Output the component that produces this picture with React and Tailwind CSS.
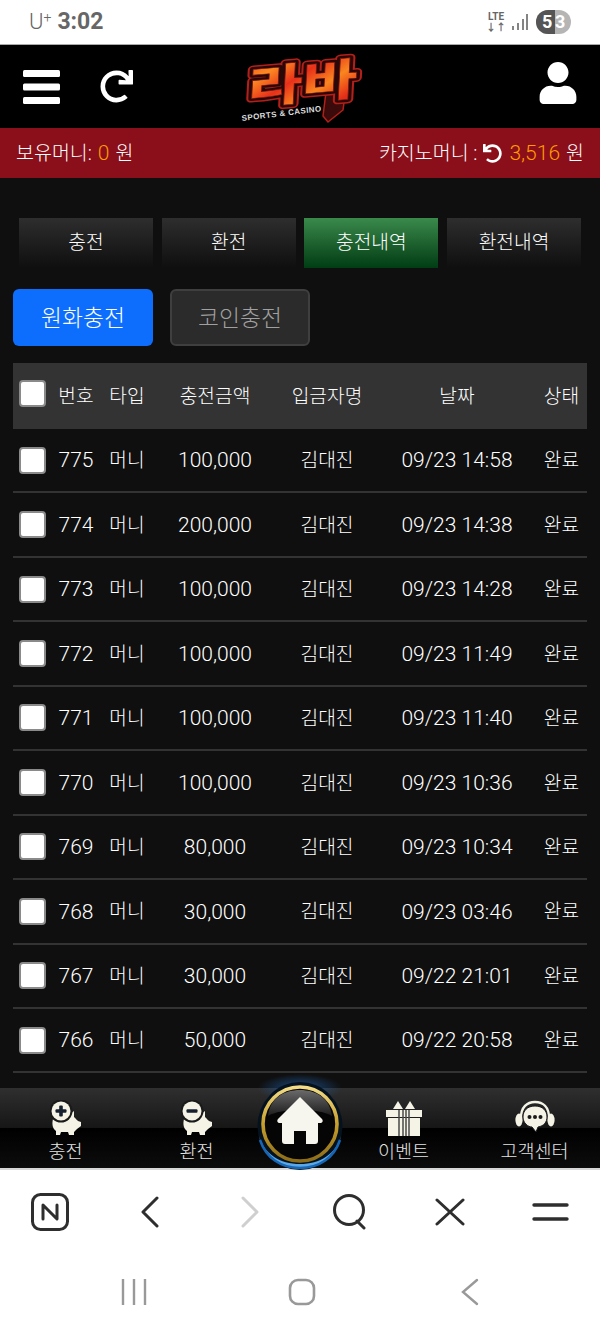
import React from "react";
import { FaRedo, FaUndo, FaUser } from "react-icons/fa";

const font = { fontFamily: 'Roboto, "Noto Sans CJK KR", sans-serif' };

const rows = [
  ["775", "100,000", "09/23 14:58"],
  ["774", "200,000", "09/23 14:38"],
  ["773", "100,000", "09/23 14:28"],
  ["772", "100,000", "09/23 11:49"],
  ["771", "100,000", "09/23 11:40"],
  ["770", "100,000", "09/23 10:36"],
  ["769", "80,000", "09/23 10:34"],
  ["768", "30,000", "09/23 03:46"],
  ["767", "30,000", "09/22 21:01"],
  ["766", "50,000", "09/22 20:58"],
];

const gridCols = "grid grid-cols-[39px_48px_54px_122px_102px_158px_51px] items-center text-center";

const Check = () => (
  <span className="mx-auto block h-[27px] w-[27px] rounded-[4px] border-2 border-[#8a8a8a] bg-white" />
);

const logoText = {
  x: 0,
  y: 0,
  fontFamily: '"Noto Sans CJK KR", sans-serif',
  fontWeight: 900,
  fontSize: 44,
  textLength: 110,
  lengthAdjust: "spacingAndGlyphs",
  strokeLinejoin: "round",
};

const Logo = () => (
  <svg width="124" height="68" viewBox="0 0 124 68" className="block overflow-visible">
    <defs>
      <linearGradient id="fire" x1="0" y1="0" x2="1" y2="1">
        <stop offset="0" stopColor="#f2401a" />
        <stop offset="0.25" stopColor="#fb8a22" />
        <stop offset="0.45" stopColor="#e8301a" />
        <stop offset="0.65" stopColor="#f9861f" />
        <stop offset="0.85" stopColor="#e52f18" />
        <stop offset="1" stopColor="#c81a14" />
      </linearGradient>
    </defs>
    <path d="M84 34L104 30L101 52L86 64L81 58Z" fill="#3a0b0a" stroke="#b3201a" strokeWidth="1.5" strokeLinejoin="round" />
    <g transform="translate(5 46) rotate(-5) skewX(-8)">
      <text {...logoText} fill="#b3201a" stroke="#b3201a" strokeWidth="8">라바</text>
      <text {...logoText} fill="#2a0808" stroke="#2a0808" strokeWidth="5">라바</text>
      <text {...logoText} fill="url(#fire)" stroke="#7a1410" strokeWidth="0.6">라바</text>
    </g>
    <text x="0" y="63" transform="rotate(-7 0 63)" fontFamily='"Liberation Sans", sans-serif' fontWeight="700" fontSize="8" fill="#dcdcdc" textLength="80">SPORTS &amp; CASINO</text>
  </svg>
);

const Piggy = ({ plus }) => (
  <svg width="32" height="36" viewBox="0 0 32 36">
    <path d="M3 19C7 15 13 14 19 15L24 11L24 17C26 19 27 20 28 21L31 22L31 26L27 29L24 32L24 35H19L18 32H11L10 35H6L6 31C2 28 2 23 3 19Z" fill="#f5f3e6" />
    <circle cx="11" cy="11" r="11.5" fill="#1a1a1a" />
    <circle cx="11" cy="11" r="9.5" fill="#f5f3e6" />
    <rect x="5.5" y="9.2" width="11" height="3.6" rx="1" fill="#16202e" />
    {plus && <rect x="9.2" y="5.5" width="3.6" height="11" rx="1" fill="#16202e" />}
  </svg>
);

const Gift = () => (
  <svg width="38" height="36" viewBox="0 0 38 36">
    <path d="M13 1L18 9H8Z M25 1L30 9H20Z" fill="#f5f3e6" />
    <rect x="1" y="10" width="36" height="7" fill="#f5f3e6" />
    <rect x="3" y="18" width="32" height="18" fill="#f5f3e6" />
    <path d="M14 10V36M18 10V36M21 10V36M24 10V36" stroke="#4a4a4a" strokeWidth="1.5" />
  </svg>
);

const Headset = () => (
  <svg width="42" height="36" viewBox="0 0 42 36">
    <path d="M7 18C7 7 13 2 21 2C29 2 35 7 35 18" fill="none" stroke="#f5f3e6" strokeWidth="2.4" />
    <ellipse cx="5" cy="20" rx="3.6" ry="6.5" fill="#f5f3e6" />
    <ellipse cx="37" cy="20" rx="3.6" ry="6.5" fill="#f5f3e6" />
    <path d="M21 6C13 6 9 11 9 17C9 23 14 27 18 27L22 32L24 27C30 26 33 22 33 17C33 11 29 6 21 6Z" fill="#f5f3e6" stroke="#1a1a1a" strokeWidth="1" />
    <circle cx="15.5" cy="17" r="2" fill="#1a1a1a" />
    <circle cx="21" cy="17" r="2" fill="#1a1a1a" />
    <circle cx="26.5" cy="17" r="2" fill="#1a1a1a" />
  </svg>
);

const HomeButton = () => (
  <svg width="100" height="100" viewBox="0 0 100 100" className="block">
    <defs>
      <linearGradient id="gold" x1="0" y1="0" x2="0" y2="1">
        <stop offset="0" stopColor="#f2dc86" />
        <stop offset="0.5" stopColor="#c79f2c" />
        <stop offset="1" stopColor="#8d6c18" />
      </linearGradient>
      <linearGradient id="gloss" x1="0" y1="0" x2="0" y2="1">
        <stop offset="0" stopColor="#6a6a6a" />
        <stop offset="1" stopColor="#1c1c1c" />
      </linearGradient>
      <radialGradient id="glow" cx="0.5" cy="0.5" r="0.5">
        <stop offset="0" stopColor="#1e5fa8" stopOpacity="0.75" />
        <stop offset="1" stopColor="#1e5fa8" stopOpacity="0" />
      </radialGradient>
    </defs>
    <ellipse cx="50" cy="14" rx="42" ry="14" fill="url(#glow)" />
    <ellipse cx="50" cy="52" rx="42.5" ry="44" fill="#04121f" />
    <path d="M9 62C13 82 30 94 50 94C70 94 87 82 91 62C86 80 70 90 50 90C30 90 14 80 9 62Z" fill="#5ba8e8" />
    <path d="M10 66C16 84 31 94 50 94C69 94 84 84 90 66" fill="none" stroke="#1666b5" strokeWidth="2.5" />
    <ellipse cx="50" cy="50" rx="37" ry="37" fill="#050505" stroke="url(#gold)" strokeWidth="3.6" />
    <path d="M18 42C20 24 34 16 50 16C66 16 80 24 82 42C70 34 30 34 18 42Z" fill="url(#gloss)" />
    <path d="M50 23L72 45C73.5 47 72.5 49 70 49H68V67C68 69 67 70 65 70H56V57H44V70H35C33 70 32 69 32 67V49H30C27.5 49 26.5 47 28 45Z" fill="#f7f6ee" />
  </svg>
);

const NavItem = ({ icon, label }) => (
  <div className="flex flex-col items-center">
    <div className="flex h-[38px] items-end">{icon}</div>
    <span className="mt-[3px] text-[18.5px] leading-[26px] font-light text-[#e4e4e4]">{label}</span>
  </div>
);

export default function App() {
  return (
    <div className="flex h-[1333px] w-[600px] flex-col overflow-hidden bg-white" style={font}>
      {/* status bar */}
      <div className="flex h-[45px] shrink-0 items-center justify-between border-b border-[#aaaaaa] px-[29px] text-[#666666]">
        <div className="flex items-baseline gap-[6px]">
          <span className="text-[22px] font-light">U<sup className="text-[14px]">+</sup></span>
          <span className="text-[23px] font-bold">3:02</span>
        </div>
        <div className="flex items-center gap-[6px]">
          <div className="flex flex-col items-center text-[10px] leading-[11px] font-bold">
            <span>LTE</span>
            <span>↓↑</span>
          </div>
          <svg width="16" height="18" viewBox="0 0 16 18">
            <path d="M1 13V17M6 10V17M11 6V17M15 1V17" stroke="#666666" strokeWidth="1.6" />
          </svg>
          <div className="ml-[2px] flex h-[24px] w-[35px] overflow-hidden rounded-full bg-[#b5b5b5] text-[18px] leading-[24px] font-bold text-white">
            <span className="w-[19px] shrink-0 bg-[#555555] pl-[6px]">5</span>
            <span>3</span>
          </div>
        </div>
      </div>

      {/* header */}
      <header className="flex h-[83px] shrink-0 items-center justify-between bg-black pr-[21px] pl-[23px]">
        <div className="flex w-[111px] items-center gap-[40px] text-white">
          <svg width="37" height="34" viewBox="0 0 37 34" fill="currentColor" className="shrink-0">
            <rect width="37" height="7" rx="1.5" />
            <rect y="13.5" width="37" height="7" rx="1.5" />
            <rect y="27" width="37" height="7" rx="1.5" />
          </svg>
          <FaRedo size={33} className="shrink-0" />
        </div>
        <div className="mt-[11px] ml-[6px]">
          <Logo />
        </div>
        <div className="mt-[-7px] flex w-[111px] justify-end text-white">
          <FaUser size={42} />
        </div>
      </header>

      {/* money bar */}
      <div className="flex h-[50px] shrink-0 items-center justify-between bg-[#8a0f1a] px-[16px] pt-[1px] text-[19.5px] font-light text-white">
        <div>
          보유머니:<span className="ml-[6px] text-[21px] text-[#ff9a00]">0</span>
          <span className="ml-[6px]">원</span>
        </div>
        <div className="flex items-center">
          <span>카지노머니 :</span>
          <FaUndo size={19} className="mr-[7px] ml-[6px]" />
          <span className="text-[21px] text-[#ff9a00]">3,516</span>
          <span className="ml-[6px]">원</span>
        </div>
      </div>

      {/* content */}
      <main className="min-h-0 flex-1 overflow-hidden bg-[#0f0f0f]">
        <div className="mx-[19px] mt-[40px] grid grid-cols-4 gap-x-[8.67px]">
          {["충전", "환전", "충전내역", "환전내역"].map((t, i) => (
            <div
              key={t}
              className={`flex h-[50px] items-center justify-center text-[19.2px] font-light text-white ${
                i === 2 ? "bg-gradient-to-b from-[#3a8a4c] to-[#013d14]" : "bg-gradient-to-b from-[#2e2e2e] to-[#0f0f0f]"
              }`}
            >
              {t}
            </div>
          ))}
        </div>

        <div className="mx-[13px] mt-[21px] flex gap-[17px]">
          <div className="flex h-[57px] w-[140px] items-center justify-center rounded-[6px] bg-[#0d6efd] pt-[3px] text-[22.8px] font-light text-white">원화충전</div>
          <div className="flex h-[57px] w-[140px] items-center justify-center rounded-[6px] border-2 border-[#3f3f3f] bg-[#2b2b2b] pt-[3px] text-[22.8px] font-light text-[#a0a0a0]">코인충전</div>
        </div>

        <div className="mx-[13px] mt-[17px] text-[19.2px] font-light text-white">
          <div className={`${gridCols} h-[66px] bg-[#333333] pt-[3px]`}>
            <span className="mt-[-9px]"><Check /></span>
            <span>번호</span>
            <span>타입</span>
            <span>충전금액</span>
            <span>입금자명</span>
            <span>날짜</span>
            <span>상태</span>
          </div>
          {rows.map((r) => (
            <div key={r[0]} className={`${gridCols} h-[64.44px] border-b-2 border-[#333333]`}>
              <Check />
              <span className="pt-[2px] text-[21px]">{r[0]}</span>
              <span className="pt-[3px]">머니</span>
              <span className="pt-[2px] text-[21px]">{r[1]}</span>
              <span className="pt-[3px]">김대진</span>
              <span className="pt-[2px] text-[21px]">{r[2]}</span>
              <span className="pt-[3px]">완료</span>
            </div>
          ))}
        </div>
      </main>

      {/* bottom nav */}
      <nav className="relative h-[82px] shrink-0 border-b-2 border-[#d8d8d8] bg-[linear-gradient(#2f2f2f_0%,#161616_50%,#000000_50%,#0c0c0c_100%)]">
        <div className="grid h-full grid-cols-[131px_131px_76px_131px_131px] pt-[10px] text-center">
          <NavItem icon={<Piggy plus />} label="충전" />
          <NavItem icon={<Piggy />} label="환전" />
          <div />
          <NavItem icon={<Gift />} label="이벤트" />
          <NavItem icon={<Headset />} label="고객센터" />
        </div>
        <div className="absolute top-[-14px] left-[250px]">
          <HomeButton />
        </div>
      </nav>

      {/* browser bar */}
      <div className="grid h-[80px] shrink-0 grid-cols-6 items-center justify-items-center bg-white pt-[3px]">
        <svg width="38" height="38" viewBox="0 0 38 38" fill="none" stroke="#2e2e2e" strokeLinecap="round" strokeLinejoin="round">
          <rect x="1.5" y="1.5" width="35" height="35" rx="8" strokeWidth="3" />
          <path d="M12 26V12L26 26V12" strokeWidth="3" />
        </svg>
        <svg width="20" height="32" viewBox="0 0 20 32" fill="none" stroke="#2e2e2e" strokeWidth="3" strokeLinecap="round" strokeLinejoin="round">
          <path d="M17 2L3 16L17 30" />
        </svg>
        <svg width="20" height="32" viewBox="0 0 20 32" fill="none" stroke="#cfcfcf" strokeWidth="3" strokeLinecap="round" strokeLinejoin="round">
          <path d="M3 2L17 16L3 30" />
        </svg>
        <svg width="34" height="36" viewBox="0 0 34 36" fill="none" stroke="#2e2e2e" strokeWidth="3" strokeLinecap="round">
          <circle cx="16" cy="16" r="14.5" />
          <path d="M24 27L31 34" />
        </svg>
        <svg width="30" height="28" viewBox="0 0 30 28" fill="none" stroke="#2e2e2e" strokeWidth="3" strokeLinecap="round">
          <path d="M2 2L28 26M28 2L2 26" />
        </svg>
        <svg width="37" height="18" viewBox="0 0 37 18" fill="none" stroke="#2e2e2e" strokeWidth="3.4" strokeLinecap="round">
          <path d="M2 2H35M2 16H35" />
        </svg>
      </div>

      {/* system nav */}
      <div className="flex h-[83px] shrink-0 items-center bg-white">
        <div className="grid w-full grid-cols-[168px_168px_168px] items-center justify-items-center px-[50px]">
          <svg width="26" height="26" viewBox="0 0 26 26" fill="none" stroke="#999999" strokeWidth="2.4">
            <path d="M2 0V26M13 0V26M24 0V26" />
          </svg>
          <svg width="28" height="28" viewBox="0 0 28 28" fill="none" stroke="#999999" strokeWidth="2.6">
            <rect x="2" y="2" width="24" height="24" rx="8" />
          </svg>
          <svg width="18" height="28" viewBox="0 0 18 28" fill="none" stroke="#999999" strokeWidth="2.4" strokeLinecap="round">
            <path d="M16 2L2 14L16 26" />
          </svg>
        </div>
      </div>
    </div>
  );
}
